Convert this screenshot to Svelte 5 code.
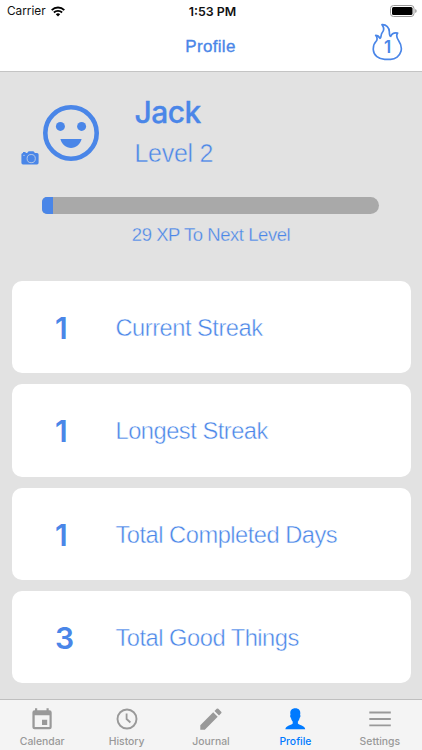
<script lang="ts">
  interface Stat {
    label: string;
    value: number;
  }

  const stats: Stat[] = [
    { label: "Current Streak", value: 1 },
    { label: "Longest Streak", value: 1 },
    { label: "Total Completed Days", value: 1 },
    { label: "Total Good Things", value: 3 },
  ];

  const tabs = ["Calendar", "History", "Journal", "Profile", "Settings"];

  let active = $state("Profile");
  let xp = $state(3.4);
</script>

<div class="screen">
  <header>
    <div class="status">
      <div class="carrier">
        <span>Carrier</span>
        <svg width="14" height="11" viewBox="0 0 14 11" fill="none" stroke="#000" stroke-width="1.9">
          <path d="M.7 4.1a9 9 0 0 1 12.6 0M2.9 6.5a5.9 5.9 0 0 1 8.2 0" />
          <path d="M7 10.4 4.8 8.2a3.2 3.2 0 0 1 4.4 0z" fill="#000" stroke="none" />
        </svg>
      </div>
      <span class="time">1:53 PM</span>
      <svg class="battery" width="28" height="12" viewBox="0 0 28 12">
        <rect x=".5" y=".5" width="23.5" height="11" rx="3" fill="none" stroke="#999" />
        <rect x="2" y="2" width="20.5" height="8" rx="1.5" />
        <path d="M25.2 4v4q1.5-.5 1.5-2t-1.5-2z" fill="#999" />
      </svg>
    </div>
    <h1>Profile</h1>
    <div class="flame">
      <svg width="32" height="39" viewBox="0 0 96 117" fill="none" stroke="#4a86e8" stroke-width="5" stroke-linejoin="round">
        <path d="M33 8C46 7 55 17 55 29C55 36 56 42 59 43C63 33 69 31 80 33C75 40 77 48 83 56C90 66 93 76 90 88C86 102 73 112 59 112H41C23 112 8 100 7 84C6 72 10 63 16 57C20 51 19 46 14 40C21 40 25 45 27 49C32 45 29 38 33 33C40 25 40 17 33 8Z" />
      </svg>
      <span>1</span>
    </div>
  </header>

  <main>
    <section class="user">
      <div class="avatar">
        <svg class="face" width="58" height="58" viewBox="0 0 58 58">
          <circle cx="29" cy="29" r="25.7" fill="none" stroke="#4a86e8" stroke-width="4.6" />
          <circle cx="18.4" cy="22.4" r="4.5" fill="#4a86e8" />
          <circle cx="39.6" cy="22.4" r="4.5" fill="#4a86e8" />
          <path d="M18.4 35.1h21.2c-1.5 5.4-5.6 9-10.6 9s-9.1-3.6-10.6-9z" fill="#4a86e8" />
        </svg>
        <svg class="camera" width="18" height="14" viewBox="0 0 18 14">
          <path d="M2 2V.9h2.6V2h1.6L7.3.6Q7.6.2 8.2.2h3.7q.6 0 .9.4L13.9 2H16q1.6 0 1.6 1.6v8.2q0 1.6-1.6 1.6H2Q.4 13.4.4 11.8V3.6Q.4 2 2 2z" fill="#4a86e8" />
          <circle cx="10.2" cy="7.6" r="4.1" fill="none" stroke="#e2e2e2" stroke-width=".7" />
          <circle cx="3" cy="4.3" r=".6" fill="#e2e2e2" />
        </svg>
      </div>
      <div class="info">
        <h2>Jack</h2>
        <p>Level 2</p>
      </div>
    </section>

    <div class="progress"><div class="fill" style="width:{xp}%"></div></div>
    <p class="next">29 XP To Next Level</p>

    <div class="cards">
      {#each stats as stat}
        <article>
          <strong>{stat.value}</strong>
          <span>{stat.label}</span>
        </article>
      {/each}
    </div>
  </main>

  <nav>
    {#each tabs as tab}
      <button class:active={active === tab} onclick={() => (active = tab)} type="button">
        <svg width="26" height="26" viewBox="0 0 26 26" fill="currentColor">
          {#if tab === "Calendar"}
            <path fill-rule="evenodd" d="M6 2.3h2.2v2h9.3v-2h2.2v2h.8q2.2 0 2.2 2.1v14.8q0 2.1-2.2 2.1H5.6q-2.2 0-2.2-2.1V6.4q0-2.1 2.2-2.1H6zM5.7 9.3v11.8h14.8V9.3zM13 13.8h5.2V19H13z" />
          {:else if tab === "History"}
            <circle cx="13" cy="13" r="9.5" fill="none" stroke="currentColor" stroke-width="1.9" />
            <path d="M12.6 7.5V13l3.8 3.5" fill="none" stroke="currentColor" stroke-width="1.8" />
          {:else if tab === "Journal"}
            <path d="M2.3 19.2 15.2 6.3l4.5 4.5L6.8 23.7H2.3zM16.5 5l2.2-2.2q.8-.8 1.6 0l2.9 2.9q.8.8 0 1.6L21 9.5z" />
          {:else if tab === "Profile"}
            <path d="M13.3 2.2c3.5 0 5.2 2.2 5 5.2l-.2 1.7c.8.4.3 2.5-.5 2.9-.3 1.7-1 2.8-1.7 3.5v2c.5 1.8 7.3 1.8 7.3 5.7H3.4c0-3.9 6.8-3.9 7.3-5.7v-2c-.7-.7-1.4-1.8-1.7-3.5-.8-.4-1.3-2.5-.5-2.9l-.2-1.7c-.2-3 1.5-5.2 5-5.2z" />
          {:else}
            <path d="M2.3 5.6h21.5v1.8H2.3zM2.3 12.1h21.5v1.8H2.3zM2.3 18.4h21.5v1.8H2.3z" />
          {/if}
        </svg>
        <span>{tab}</span>
      </button>
    {/each}
  </nav>
</div>

<style>
  :global(body) { margin: 0; }
  .screen {
    width: 422px; height: 750px; display: flex; flex-direction: column;
    overflow: hidden; background: #e2e2e2; color: #4a86e8;
    font-family: "Liberation Sans", Arial, sans-serif;
  }
  h1, h2, p { margin: 0; }
  header {
    position: relative; box-sizing: border-box; height: 72px; flex: none;
    background: #fff; border-bottom: 1px solid #c4c4c4;
  }
  .status {
    display: grid; grid-template-columns: 1fr auto 1fr; align-items: center;
    height: 22px; padding: 0 4px 0 7px; color: #111;
    font-family: Inter, sans-serif; font-size: 11.8px;
  }
  .carrier { display: flex; align-items: center; gap: 5px; }
  .time { font-weight: 600; font-size: 12.4px; }
  .battery { justify-self: end; }
  h1 {
    font-weight: 400; font-size: 17px; line-height: 22px; text-align: center;
    margin-top: 14px; padding-right: 1px; letter-spacing: 0.3px; -webkit-text-stroke: 0.35px;
  }
  .flame { position: absolute; left: 371px; top: 22px; width: 32px; height: 39px; }
  .flame span {
    position: absolute; left: 1px; right: 0; top: 15px; text-align: center;
    font: 600 17px/20px Inter, sans-serif;
  }
  main { flex: 1; }
  .user { display: flex; height: 125px; }
  .avatar { position: relative; width: 134.5px; }
  .face { position: absolute; left: 42px; top: 32px; }
  .camera { position: absolute; left: 21px; top: 79px; }
  h2 {
    font: 500 30px/36px Inter, sans-serif; margin-top: 22px; letter-spacing: -0.5px;
    -webkit-text-stroke: 0.3px;
  }
  /* a stroke in the background colour thins the letters */
  .info p {
    font-size: 25px; line-height: 30px; margin-top: 8px; letter-spacing: -0.3px;
    -webkit-text-stroke: 0.45px #e2e2e2;
  }
  .progress {
    width: 337px; height: 17px; margin-left: 42px; overflow: hidden;
    border-radius: 5px 8.5px 8.5px 5px; background: #a9a9a9;
  }
  .fill { height: 100%; background: #4a86e8; }
  .next {
    text-align: center; font-size: 18.5px; line-height: 24px; margin-top: 9px;
    letter-spacing: -0.45px; -webkit-text-stroke: 0.3px #e2e2e2;
  }
  .cards { display: grid; gap: 11px; padding: 0 11.5px; margin-top: 34px; }
  article {
    display: flex; align-items: center; box-sizing: border-box; height: 92.3px;
    padding: 2px 0 0 43.5px; border-radius: 10px; background: #fff;
  }
  strong { width: 60.5px; font: 600 30px/34px Inter, sans-serif; }
  article span {
    font-size: 23.7px; line-height: 34px; letter-spacing: -0.5px;
    -webkit-text-stroke: 0.45px #fff;
  }
  nav {
    display: flex; box-sizing: border-box; height: 51px; flex: none;
    background: #f4f4f4; border-top: 1px solid #bfbfbf;
  }
  button {
    flex: 1; display: flex; flex-direction: column; align-items: center;
    padding: 6px 0 0; border: 0; background: none; color: #999;
    font: 500 10.4px/14px Inter, sans-serif; cursor: pointer;
  }
  button span { margin-top: 3px; }
  button.active { color: #007aff; }
</style>
